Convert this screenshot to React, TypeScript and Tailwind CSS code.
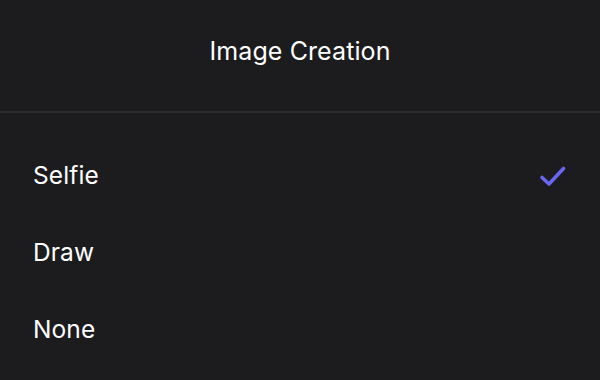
import React from "react";

export default function App() {
  const items = ["Selfie", "Draw", "None"];
  return (
    <div
      className="w-[600px] h-[380px] bg-[#1c1c1e] text-white overflow-hidden"
      style={{ fontFamily: "Inter, 'Noto Sans', sans-serif" }}
    >
      <div className="h-[111px] flex items-center justify-center pb-[8px]">
        <span className="text-[25px] tracking-[0.1px]">Image Creation</span>
      </div>
      <div className="h-[2px] bg-[#2a2a2c]" />
      <div className="pt-[24px]">
        {items.map((it, i) => (
          <div key={it} className="h-[77px] flex items-center justify-between pl-[33px] pr-[33px]">
            <span className="text-[24.5px] tracking-[0.1px]">{it}</span>
            {i === 0 && (
              <svg width="28" height="24" viewBox="0 0 28 24" fill="none">
                <path
                  d="M3 13.5 L10 20 L24.5 4.5"
                  stroke="#6866f2"
                  strokeWidth="3.6"
                  strokeLinecap="round"
                  strokeLinejoin="round"
                />
              </svg>
            )}
          </div>
        ))}
      </div>
    </div>
  );
}
